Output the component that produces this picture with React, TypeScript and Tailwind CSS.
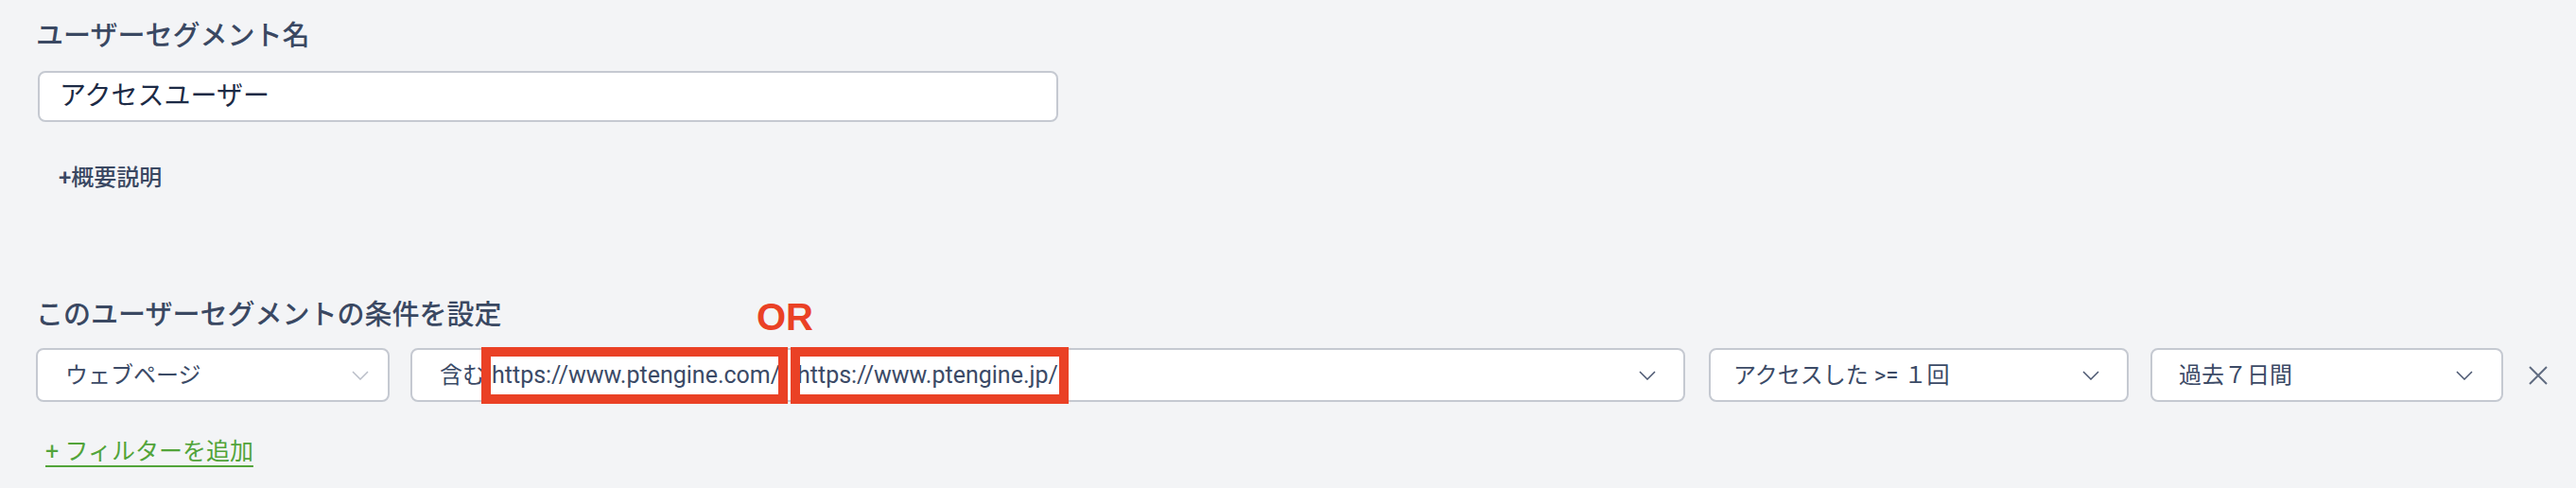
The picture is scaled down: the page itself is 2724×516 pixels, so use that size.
import React from "react";

function Chevron({ className }: { className: string }) {
  return (
    <svg width="18" height="10" viewBox="0 0 18 10" fill="none" className={className}>
      <path d="M1 1 L9 9 L17 1" stroke="currentColor" strokeWidth="1.5" />
    </svg>
  );
}

export default function App() {
  return (
    <div className="min-h-[516px] w-full bg-[#f3f4f6] pl-[38px] pt-[18px] font-[Roboto,'Noto_Sans_CJK_JP',sans-serif]">
      {/* Segment name */}
      <div className="h-[40px] text-[29px] leading-[40px] font-medium text-[#3a4862]">
        ユーザーセグメント名
      </div>
      <div className="mt-[17px] ml-[2px] flex h-[54px] w-[1079px] items-center rounded-[8px] border-2 border-[#c5c9d1] bg-white pl-[21px] text-[28px] text-[#1c2a45]">
        アクセスユーザー
      </div>
      <div className="mt-[43px] ml-[24px] h-[32px] text-[24px] leading-[32px] font-medium text-[#3a4862]">
        +概要説明
      </div>

      {/* Conditions */}
      <div className="relative mt-[109px] h-[40px] text-[29px] leading-[40px] font-medium text-[#3a4862]">
        このユーザーセグメントの条件を設定
        <span className="absolute top-[2px] left-[762px] font-['Liberation_Sans',Arial,sans-serif] text-[40px] leading-[40px] font-bold text-[#ea4125]">
          OR
        </span>
      </div>

      <div className="mt-[15px] flex h-[57px] items-center text-[24px] text-[#3b4a66]">
        <div className="flex h-[57px] w-[374px] items-center justify-between rounded-[8px] border-2 border-[#c5c9d1] bg-white pr-[20px] pl-[29px]">
          <span>ウェブページ</span>
          <Chevron className="text-[#b9bec8]" />
        </div>

        <div className="ml-[22px] flex h-[57px] w-[1348px] items-center justify-between rounded-[8px] border-2 border-[#c5c9d1] bg-white pr-[29px] pl-[29px]">
          <div className="flex items-center whitespace-nowrap">
            <span>含む</span>
            <span className="ml-[6px] flex h-[40px] w-[304px] items-center pl-[1px] text-[25px] outline-solid outline-[10px] outline-[#ea4125]">
              https://www.ptengine.com/
            </span>
            <span className="ml-[23px] flex h-[40px] w-[274px] items-center text-[25px] outline-solid outline-[10px] outline-[#ea4125]">
              <span className="-ml-[3px]">https://www.ptengine.jp/</span>
            </span>
          </div>
          <Chevron className="text-[#4a5670]" />
        </div>

        <div className="ml-[25px] flex h-[57px] w-[444px] items-center justify-between rounded-[8px] border-2 border-[#c5c9d1] bg-white pr-[29px] pl-[24px]">
          <span>アクセスした &gt;= １回</span>
          <Chevron className="text-[#4a5670]" />
        </div>

        <div className="ml-[23px] flex h-[57px] w-[373px] items-center justify-between rounded-[8px] border-2 border-[#c5c9d1] bg-white pr-[30px] pl-[28px]">
          <span>過去７日間</span>
          <Chevron className="text-[#4a5670]" />
        </div>

        <svg width="20" height="20" viewBox="0 0 20 20" className="ml-[27px] text-[#5f6b80]">
          <path d="M1 1 L19 19 M19 1 L1 19" stroke="currentColor" strokeWidth="2" />
        </svg>
      </div>

      <div className="mt-[37px] ml-[10px] h-[32px] text-[25px] leading-[32px]">
        <span className="text-[#52a43a] underline decoration-2 underline-offset-[6px]">
          + フィルターを追加
        </span>
      </div>
    </div>
  );
}
